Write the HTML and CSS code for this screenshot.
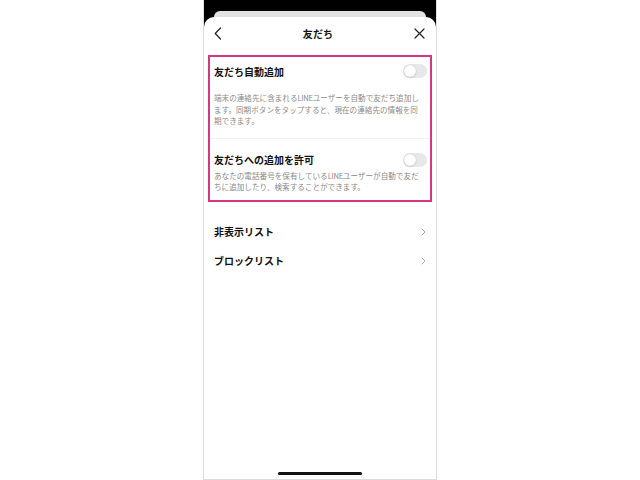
FILE: index.html
```html
<!DOCTYPE html>
<html lang="ja">
<head>
<meta charset="utf-8">
<title>友だち</title>
<link rel="stylesheet" href="styles.css">
</head>
<body>
<div class="phone">
  <div class="peek"></div>
  <div class="sheet">
    <div class="header">
      <svg class="back" width="8" height="13" viewBox="0 0 8 13"><path d="M6.5 1 L1.2 6.5 L6.5 12" fill="none" stroke="#222" stroke-width="1.2" stroke-linecap="round" stroke-linejoin="round"/></svg>
      <div class="title">友だち</div>
      <svg class="close" width="11" height="11" viewBox="0 0 11 11"><path d="M1 1 L10 10 M10 1 L1 10" fill="none" stroke="#222" stroke-width="1.2" stroke-linecap="round"/></svg>
    </div>
    <div class="box">
      <div class="section first">
        <div class="row">
          <span class="label">友だち自動追加</span>
          <span class="toggle"><span class="knob"></span></span>
        </div>
        <p class="desc gap">端末の連絡先に含まれる<span class="latin">LINE</span>ユーザーを自動で友だち追加し<br>ます。同期ボタンをタップすると、現在の連絡先の情報を同<br>期できます。</p>
      </div>
      <div class="section second">
        <div class="row">
          <span class="label">友だちへの追加を許可</span>
          <span class="toggle"><span class="knob"></span></span>
        </div>
        <p class="desc">あなたの電話番号を保有している<span class="latin">LINE</span>ユーザーが自動で友だ<br>ちに追加したり、検索することができます。</p>
      </div>
    </div>
    <div class="list">
      <div class="item"><span class="label">非表示リスト</span><svg class="chev" width="5" height="8" viewBox="0 0 5 8"><path d="M1 1 L4 4 L1 7" fill="none" stroke="#aaa" stroke-width="1" stroke-linecap="round" stroke-linejoin="round"/></svg></div>
      <div class="item"><span class="label">ブロックリスト</span><svg class="chev" width="5" height="8" viewBox="0 0 5 8"><path d="M1 1 L4 4 L1 7" fill="none" stroke="#aaa" stroke-width="1" stroke-linecap="round" stroke-linejoin="round"/></svg></div>
    </div>
    <div class="home"></div>
  </div>
</div>
</body>
</html>
```

FILE: styles.css
```css
html, body {
  margin: 0;
  padding: 0;
  background: #ffffff;
}
body {
  font-family: "Noto Sans CJK JP", "Noto Sans", sans-serif;
  color: #111;
}
.phone {
  width: 232px;
  height: 479px;
  margin: 0 auto;
  background: #000;
  border-left: 1px solid #dcdcdc;
  border-right: 1px solid #dcdcdc;
  border-bottom: 1px solid #dcdcdc;
  display: flex;
  flex-direction: column;
  overflow: hidden;
}
.peek {
  height: 6px;
  margin: 11px 10px 0;
  background: #e2e2e2;
  border-radius: 6px 6px 0 0;
  flex: none;
}
.sheet {
  flex: 1;
  background: #fff;
  border-radius: 10px 10px 0 0;
  display: flex;
  flex-direction: column;
}
.header {
  height: 33px;
  display: flex;
  align-items: center;
  justify-content: space-between;
  padding: 0 10px 0 10px;
  flex: none;
}
.title {
  font-size: 10px;
  font-weight: 700;
  color: #111;
  letter-spacing: 0.2px;
}
.close { margin-right: 1px; }
.box {
  margin: 5px 4px 0;
  border: 2px solid #d4387f;
}
.section { padding: 0 3px 0 4px; }
.section.first {
  padding-top: 4px;
  padding-bottom: 11px;
  border-bottom: 1px solid #f1f1f1;
}
.section.second {
  padding-top: 11px;
  padding-bottom: 7px;
}
.row {
  height: 20px;
  display: flex;
  align-items: center;
  justify-content: space-between;
}
.label {
  font-size: 10px;
  font-weight: 700;
  color: #111;
}
.toggle {
  width: 24px;
  height: 14px;
  border-radius: 7px;
  background: #e8e8ea;
  position: relative;
  flex: none;
}
.knob {
  position: absolute;
  left: 1px;
  top: 1px;
  width: 12px;
  height: 12px;
  border-radius: 50%;
  background: #fff;
  box-shadow: 0 0 1px rgba(0,0,0,0.25), 0 1px 2px rgba(0,0,0,0.12);
}
.desc {
  margin: 0;
  font-size: 7.6px;
  line-height: 11.5px;
  color: #8a8a8a;
  white-space: nowrap;
}
.latin { letter-spacing: -0.3px; }
.desc.gap { margin-top: 11px; }
.list { margin-top: 15.5px; }
.item {
  height: 29px;
  display: flex;
  align-items: center;
  justify-content: space-between;
  padding: 0 10px 0 10px;
}
.home {
  margin: auto auto 4px;
  width: 84px;
  height: 3px;
  border-radius: 2px;
  background: #111;
  flex: none;
}
```
